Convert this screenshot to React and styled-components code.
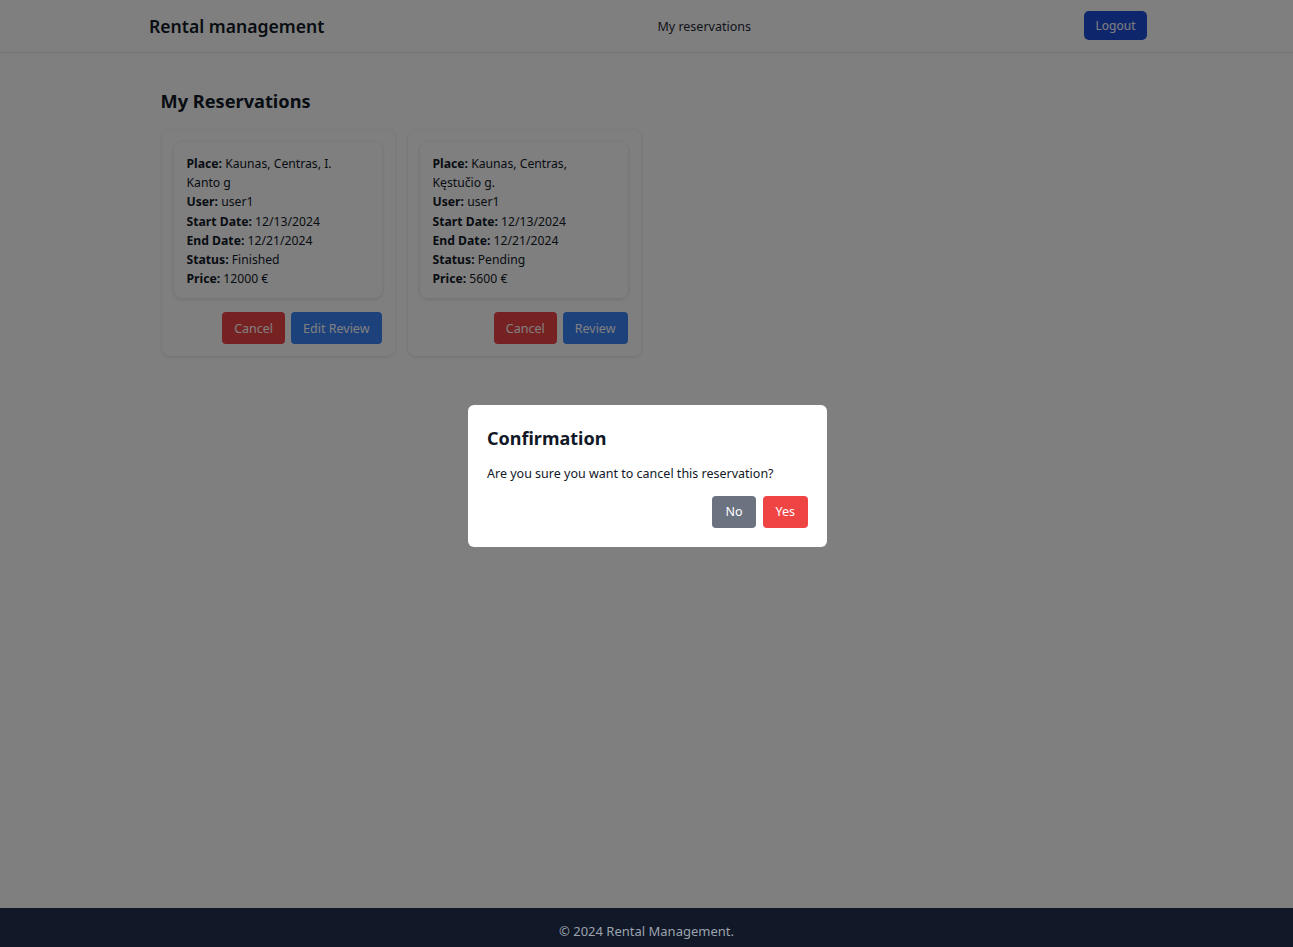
import React from "react";
import styled, {createGlobalStyle} from 'styled-components';

const GlobalStyle = createGlobalStyle`
    html, body {
        margin: 0;
        padding: 0;
    }
    body {
        font-family: "Noto Sans", "Open Sans", Arial, sans-serif;
        font-size: 12.2px;
        color: #111827;
        background: #ffffff;
    }
    * {
        box-sizing: border-box;
    }
`;

const Page = styled.div`
    min-height: 100vh;
    display: flex;
    flex-direction: column;
`;

const Header = styled.header`
    height: 53px;
    border-bottom: 1px solid #e5e7eb;
    background: #ffffff;
`;

const HeaderInner = styled.div`
    max-width: 1001px;
    height: 100%;
    margin: 0 auto;
    padding-left: 3px;
    display: flex;
    align-items: center;
    justify-content: space-between;
`;

const Brand = styled.div`
    font-size: 17.6px;
    font-weight: 600;
    color: #111827;
    margin-top: -1px;
`;

const NavLink = styled.a`
    font-size: 12.5px;
    color: #1f2937;
    text-decoration: none;
    cursor: pointer;
`;

const LogoutButton = styled.button`
    height: 29px;
    width: 63px;
    border: none;
    border-radius: 5px;
    background: #1d4ed8;
    color: #ffffff;
    font-family: inherit;
    font-size: 12px;
    margin-top: -1px;
`;

const Main = styled.main`
    flex: 1;
    width: 100%;
    max-width: 998px;
    margin: 0 auto;
    padding: 35px 12px 0 13px;
`;

const Title = styled.h2`
    margin: 0 0 16px;
    font-size: 18.2px;
    font-weight: 700;
    line-height: 26px;
`;

const CardList = styled.div`
    display: grid;
    grid-template-columns: repeat(auto-fill, 233px);
    gap: 13px;
    padding-left: 1px;
`;

const Card = styled.div`
    background: #ffffff;
    border-radius: 8px;
    box-shadow: 0 1px 4px rgba(0, 0, 0, 0.12);
    padding: 12px 13px 12px 12px;
`;

const Details = styled.div`
    border-radius: 8px;
    box-shadow: 0 1px 4px rgba(0, 0, 0, 0.14);
    padding: 12px 16px 10px 13px;
    line-height: 19.2px;
`;

const Row = styled.div``;

const Label = styled.strong`
    font-weight: 700;
`;

const Actions = styled.div`
    display: flex;
    justify-content: flex-end;
    gap: 6px;
    margin-top: 14px;
`;

const Button = styled.button`
    height: 32px;
    padding: 0 ${p => p.$pad || 12}px;
    border: none;
    border-radius: 4px;
    color: #ffffff;
    font-family: inherit;
    font-size: 12.5px;
    background: ${p => p.$tone === 'red' ? '#ef4444' : p.$tone === 'gray' ? '#6b7280' : '#3b82f6'};
`;

const Overlay = styled.div`
    position: fixed;
    inset: 0;
    background: rgba(0, 0, 0, 0.5);
    display: flex;
    align-items: center;
    justify-content: center;
    z-index: 10;
`;

const Modal = styled.div`
    width: 359px;
    background: #ffffff;
    border-radius: 6px;
    padding: 20px 19px 19px;
    margin-top: 4px;
    margin-left: 2px;
`;

const ModalTitle = styled.h3`
    margin: 0 0 14px;
    font-size: 18px;
    font-weight: 700;
    line-height: 26px;
`;

const ModalText = styled.p`
    margin: 0 0 13px;
    font-size: 12.5px;
    line-height: 18px;
`;

const ModalActions = styled(Actions)`
    margin-top: 0;
    gap: 7px;
`;

const Footer = styled.footer`
    position: relative;
    z-index: 20;
    height: 39px;
    background: #111827;
    color: #9ca3af;
    font-size: 13px;
    display: flex;
    align-items: center;
    justify-content: center;
    padding-top: 7px;
`;

const reservations = [
    {id: 1, place: 'Kaunas, Centras, I. Kanto g', user: 'user1', start: '12/13/2024', end: '12/21/2024', status: 'Finished', price: '12000 €', review: 'Edit Review'},
    {id: 2, place: 'Kaunas, Centras, Kęstučio g.', user: 'user1', start: '12/13/2024', end: '12/21/2024', status: 'Pending', price: '5600 €', review: 'Review'},
];

class App extends React.Component {
    render() {
        let listItems = reservations.map(item =>
            <Card key={item.id}>
                <Details>
                    <Row><Label>Place:</Label> {item.place}</Row>
                    <Row><Label>User:</Label> {item.user}</Row>
                    <Row><Label>Start Date:</Label> {item.start}</Row>
                    <Row><Label>End Date:</Label> {item.end}</Row>
                    <Row><Label>Status:</Label> {item.status}</Row>
                    <Row><Label>Price:</Label> {item.price}</Row>
                </Details>
                <Actions>
                    <Button $tone="red">Cancel</Button>
                    <Button $tone="blue">{item.review}</Button>
                </Actions>
            </Card>
        );
        return (
            <Page>
                <GlobalStyle/>
                <Header>
                    <HeaderInner>
                        <Brand>Rental management</Brand>
                        <NavLink>My reservations</NavLink>
                        <LogoutButton>Logout</LogoutButton>
                    </HeaderInner>
                </Header>
                <Main>
                    <Title>My Reservations</Title>
                    <CardList>{listItems}</CardList>
                </Main>
                <Footer>© 2024 Rental Management.</Footer>
                <Overlay>
                    <Modal>
                        <ModalTitle>Confirmation</ModalTitle>
                        <ModalText>Are you sure you want to cancel this reservation?</ModalText>
                        <ModalActions>
                            <Button $tone="gray" $pad={13}>No</Button>
                            <Button $tone="red" $pad={13}>Yes</Button>
                        </ModalActions>
                    </Modal>
                </Overlay>
            </Page>
        );
    }
}

export default App;
